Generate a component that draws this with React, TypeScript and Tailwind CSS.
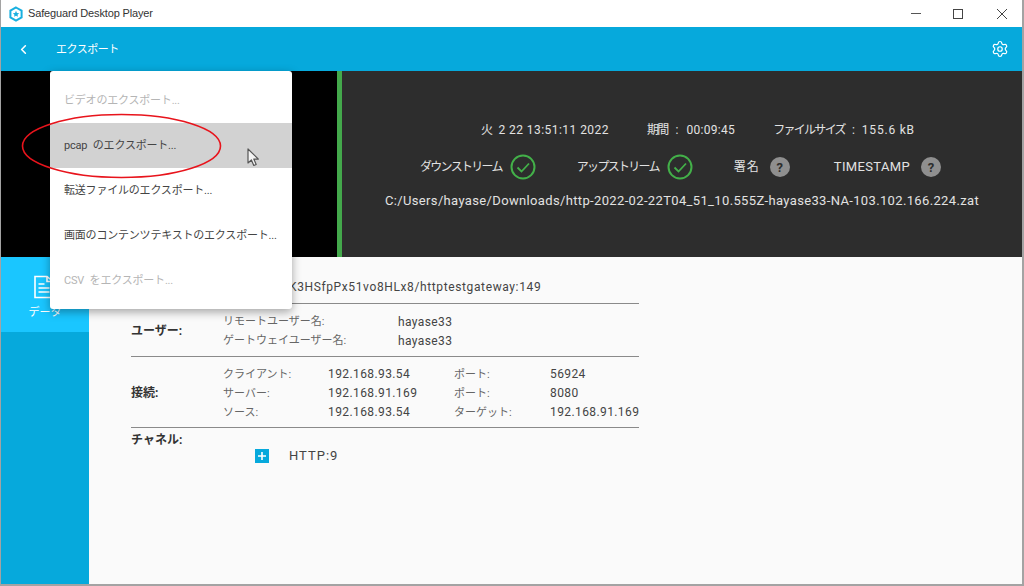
import React from "react";
import { Settings, ChevronLeft } from "lucide-react";

const FONT = "font-['Roboto','Noto_Sans_CJK_JP',sans-serif]";

function CheckCircle() {
  return (
    <svg width="26" height="26" viewBox="0 0 26 26" fill="none" className="shrink-0">
      <circle cx="13" cy="13" r="11.5" stroke="#43b049" strokeWidth="2" />
      <path d="M7.5 13.5l4 4 7.5-8" stroke="#43b049" strokeWidth="1.8" />
    </svg>
  );
}

function Question() {
  return (
    <span className="flex h-5 w-5 shrink-0 items-center justify-center rounded-full bg-[#8f8f8f] text-[13px] font-bold leading-none text-[#2d2d2d]">
      ?
    </span>
  );
}

function MenuItem({ label, disabled, active }: { label: string; disabled?: boolean; active?: boolean }) {
  return (
    <div
      className={`flex h-[45px] items-center whitespace-nowrap pl-[14px] pt-[2px] text-[11px] tracking-[-0.2px] [word-spacing:3px] ${active ? "bg-[#d2d2d2]" : ""} ${
        disabled ? "text-[#b5b5b5]" : "text-[#444444]"
      }`}
    >
      {label}
    </div>
  );
}

function Row({ children, cols }: { children: React.ReactNode; cols: string }) {
  return <div className={`grid h-[19px] items-center ${cols}`}>{children}</div>;
}

const Label = ({ children }: { children: React.ReactNode }) => <span className="whitespace-nowrap pt-[2px] text-[11px] text-[#666666]">{children}</span>;
const Value = ({ children }: { children: React.ReactNode }) => <span className="whitespace-nowrap text-[12px] tracking-[0.4px] text-[#444444]">{children}</span>;
const Cjk = ({ children }: { children: React.ReactNode }) => <span className="whitespace-nowrap text-[12px] tracking-[-1.7px]">{children}</span>;
const Lat = ({ children }: { children: React.ReactNode }) => <span className="whitespace-nowrap text-[13px] tracking-[0.35px]">{children}</span>;
const Num = ({ children }: { children: React.ReactNode }) => <span className="whitespace-nowrap text-[12px] tracking-[0.3px]">{children}</span>;

export default function App() {
  return (
    <div className={`${FONT} relative h-[586px] w-[1024px] overflow-hidden bg-[#a3a3a3] pb-[2px] pl-px pr-[2px] text-[12px]`}>
      <div className="flex h-full flex-col">
        {/* Title bar */}
        <div className="flex h-[27px] shrink-0 items-center bg-white">
          <svg width="16" height="16" viewBox="0 0 16 16" className="ml-[7px]">
            <path d="M8 1.5l5.6 3.2v6.6L8 14.5l-5.6-3.2V4.7z" fill="none" stroke="#19b0e0" strokeWidth="2" />
            <path d="M8 4.8l.95 2.1 2.25.25-1.7 1.5.5 2.2L8 9.7l-2 1.15.5-2.2-1.7-1.5 2.25-.25z" fill="#19b0e0" />
          </svg>
          <span className="ml-[4px] font-['Liberation_Sans',sans-serif] text-[11px] tracking-[-0.15px] text-[#333333]">Safeguard Desktop Player</span>
          <div className="ml-auto flex items-center">
            <span className="mr-[32px] h-px w-[10px] bg-[#555555]" />
            <span className="mr-[34px] h-[10px] w-[10px] border border-[#444444]" />
            <svg width="10" height="10" viewBox="0 0 10 10" className="mr-[15px]">
              <path d="M0 0l10 10M10 0L0 10" stroke="#444444" strokeWidth="1" />
            </svg>
          </div>
        </div>
        {/* App bar */}
        <div className="flex h-[44px] shrink-0 items-center bg-[#06a9dc] text-white">
          <ChevronLeft size={15} strokeWidth={2.5} className="ml-[15px]" />
          <span className="ml-[25px] pt-[2px] text-[11px] tracking-[-0.5px]">エクスポート</span>
          <Settings size={18} strokeWidth={1.6} className="ml-auto mr-[13px]" />
        </div>
        {/* Video + info */}
        <div className="flex h-[186px] shrink-0">
          <div className="w-[336px] bg-black" />
          <div className="w-[5px] bg-[#43a84b]" />
          <div className="flex flex-1 flex-col items-center bg-[#2d2d2d] text-[#e2e2e2]">
            <div className="mt-[50px] flex h-[18px] items-center gap-[38px] pl-[32px]">
              <span className="flex items-center"><Cjk>火</Cjk><span className="ml-[7px]"><span className="whitespace-nowrap text-[12px] tracking-[0.45px]">2 22 13:51:11 2022</span></span></span>
              <span className="flex items-center"><Cjk>期間</Cjk><span className="ml-[8px]">:</span><span className="ml-[8px]"><Num>00:09:45</Num></span></span>
              <span className="flex items-center"><Cjk>ファイルサイズ</Cjk><span className="ml-[7px]">:</span><span className="ml-[7px] tracking-[0.8px]">155.6 kB</span></span>
            </div>
            <div className="mt-[15px] flex h-[26px] items-center pr-[3px]">
              <Cjk>ダウンストリーム</Cjk>
              <span className="ml-[8px]"><CheckCircle /></span>
              <span className="ml-[41px]"><Cjk>アップストリーム</Cjk></span>
              <span className="ml-[8px]"><CheckCircle /></span>
              <span className="ml-[41px] tracking-[1px]">署名</span>
              <span className="ml-[10px]"><Question /></span>
              <span className="ml-[44px]"><Lat>TIMESTAMP</Lat></span>
              <span className="ml-[11px]"><Question /></span>
            </div>
            <div className="mt-[12px] leading-[18px]"><Lat>C:/Users/hayase/Downloads/http-2022-02-22T04_51_10.555Z-hayase33-NA-103.102.166.224.zat</Lat></div>
          </div>
        </div>
        {/* Bottom */}
        <div className="flex min-h-0 flex-1">
          <div className="w-[88px] shrink-0 bg-[#06a9dc]">
            <div className="flex h-[75px] flex-col items-center bg-[#1ac6ff] pt-[18px] text-white">
              <svg width="22" height="24" viewBox="0 0 22 24" fill="none" stroke="white" strokeWidth="1.6" className="mr-[2px]">
                <path d="M2 1.5h12l6 5v16H2z" />
                <path d="M14 1.5v5h6M5.5 9h6M5.5 13h11M5.5 17h11" />
              </svg>
              <span className="mt-[6px] text-[11px]">データ</span>
            </div>
          </div>
          <div className="min-w-0 flex-1 bg-[#fafafa] pl-[42px]">
            <div className="w-[508px]">
              <div className="flex h-[47px] items-end border-b border-[#8a8a8a] pb-[7px] pl-[158px] leading-[18px] text-[#444444]">
                <span className="whitespace-nowrap tracking-[0.62px]">K3HSfpPx51vo8HLx8/httptestgateway:149</span>
              </div>
              <div className="flex h-[53px] items-center border-b border-[#8a8a8a] pt-[2px]">
                <span className="w-[92px] shrink-0 text-[12px] font-bold text-[#333333]">ユーザー:</span>
                <div className="flex-1">
                  <Row cols="grid-cols-[175px_1fr]"><Label>リモートユーザー名:</Label><Value>hayase33</Value></Row>
                  <Row cols="grid-cols-[175px_1fr]"><Label>ゲートウェイユーザー名:</Label><Value>hayase33</Value></Row>
                </div>
              </div>
              <div className="flex h-[71px] items-center border-b border-[#8a8a8a] pt-[2px]">
                <span className="w-[92px] shrink-0 text-[12px] font-bold text-[#333333]">接続:</span>
                <div className="flex-1">
                  <Row cols="grid-cols-[105px_126px_96px_1fr]"><Label>クライアント:</Label><Value>192.168.93.54</Value><Label>ポート:</Label><Value>56924</Value></Row>
                  <Row cols="grid-cols-[105px_126px_96px_1fr]"><Label>サーバー:</Label><Value>192.168.91.169</Value><Label>ポート:</Label><Value>8080</Value></Row>
                  <Row cols="grid-cols-[105px_126px_96px_1fr]"><Label>ソース:</Label><Value>192.168.93.54</Value><Label>ターゲット:</Label><Value>192.168.91.169</Value></Row>
                </div>
              </div>
              <div className="pt-[3px] text-[12px] font-bold leading-[18px] text-[#333333]">チャネル:</div>
              <div className="-mt-[3px] flex items-center pl-[124px]">
                <span className="flex h-[14px] w-[14px] items-center justify-center bg-[#06a9dc]">
                  <svg width="8" height="8" viewBox="0 0 8 8"><path d="M4 0v8M0 4h8" stroke="white" strokeWidth="1.6" /></svg>
                </span>
                <span className="ml-[20px] text-[13px] tracking-[1px] text-[#444444]">HTTP:9</span>
              </div>
            </div>
          </div>
        </div>
      </div>

      {/* Export menu */}
      <div className="absolute left-[50px] top-[71px] h-[238px] w-[242px] rounded-[3px] bg-white pt-[7px] shadow-[0_3px_10px_rgba(0,0,0,0.35)]">
        <MenuItem label="ビデオのエクスポート..." disabled />
        <MenuItem label="pcap のエクスポート..." active />
        <MenuItem label="転送ファイルのエクスポート..." />
        <MenuItem label="画面のコンテンツテキストのエクスポート..." />
        <MenuItem label="CSV をエクスポート..." disabled />
      </div>

      {/* Annotation ellipse */}
      <svg width="204" height="70" viewBox="0 0 204 70" fill="none" className="absolute left-[20px] top-[112px]">
        <ellipse cx="101.5" cy="34" rx="99" ry="31.5" stroke="#e8141c" strokeWidth="1.6" />
      </svg>

      {/* Cursor */}
      <svg width="14" height="20" viewBox="0 0 14 20" className="absolute left-[247px] top-[148px]">
        <path d="M1 1v14l3.4-3 2.4 5.5 2.4-1-2.4-5.4h4.6z" fill="#f4f4f4" stroke="#555555" strokeWidth="1.2" strokeLinejoin="round" />
      </svg>
    </div>
  );
}
